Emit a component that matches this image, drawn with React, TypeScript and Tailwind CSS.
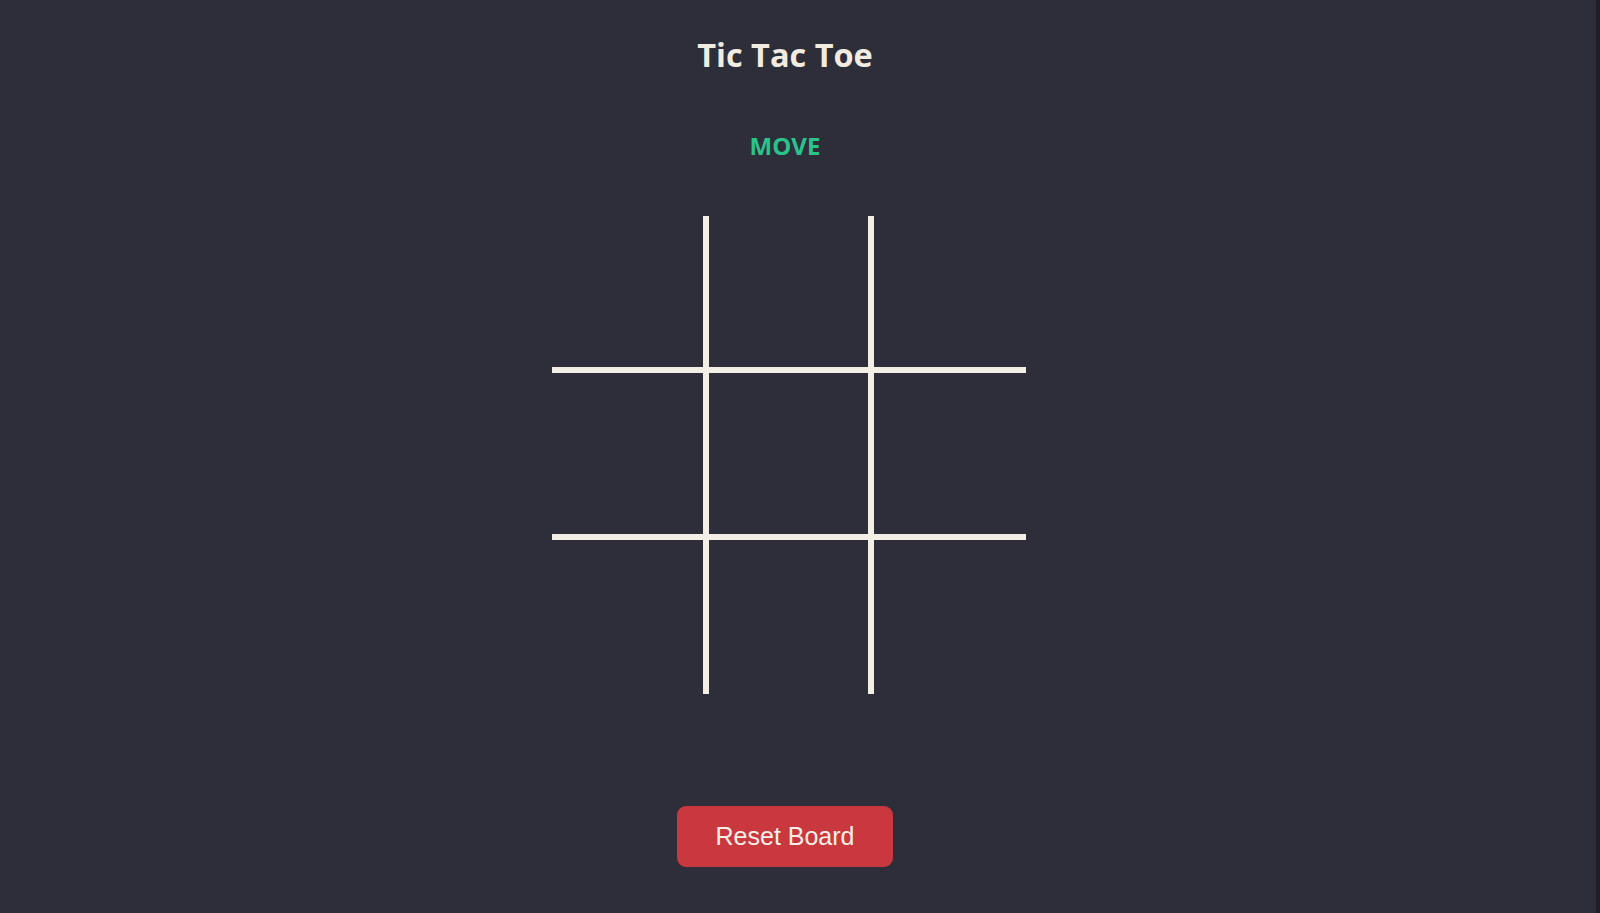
import React from "react";

export default function App() {
  const cells = Array.from({ length: 9 }, (_, i) => i);
  const cellClass = (i: number) => {
    const r = Math.floor(i / 3);
    const c = i % 3;
    const parts: string[] = [];
    if (c === 1) parts.push("border-x-[6px]");
    if (r === 1) parts.push("border-y-[6px]");
    return parts.join(" ");
  };
  return (
    <div className="flex h-[913px] w-full overflow-hidden bg-[#2e2e3a]">
      <div
        className="flex w-[1570px] flex-col items-center"
        style={{ fontFamily: '"Open Sans", "Noto Sans", sans-serif' }}
      >
        <h1 className="mt-[33px] h-[44px] text-[32.5px] font-bold leading-[44px] text-[#f1ebe1]">
          Tic Tac Toe
        </h1>
        <div className="mt-[53px] h-[32px] text-[24px] font-bold leading-[32px] text-[#2ac38b]">
          MOVE
        </div>
        <div className="ml-[8px] mt-[54px] grid h-[478px] w-[474px] grid-cols-[151px_171px_152px] grid-rows-[151px_173px_154px]">
          {cells.map((i) => (
            <button
              key={i}
              className={`border-solid border-[#f4efe6] ${cellClass(i)}`}
              aria-label={`cell ${i + 1}`}
            />
          ))}
        </div>
        <button
          className="mt-[112px] flex h-[61px] w-[216px] items-center justify-center rounded-[9px] bg-[#c8383e] text-[25px] text-[#f6efe8]"
          style={{ fontFamily: '"Liberation Sans", Arial, sans-serif' }}
        >
          Reset Board
        </button>
      </div>
      <div className="ml-auto h-full w-[4px] bg-[#1f1f25]" />
    </div>
  );
}
